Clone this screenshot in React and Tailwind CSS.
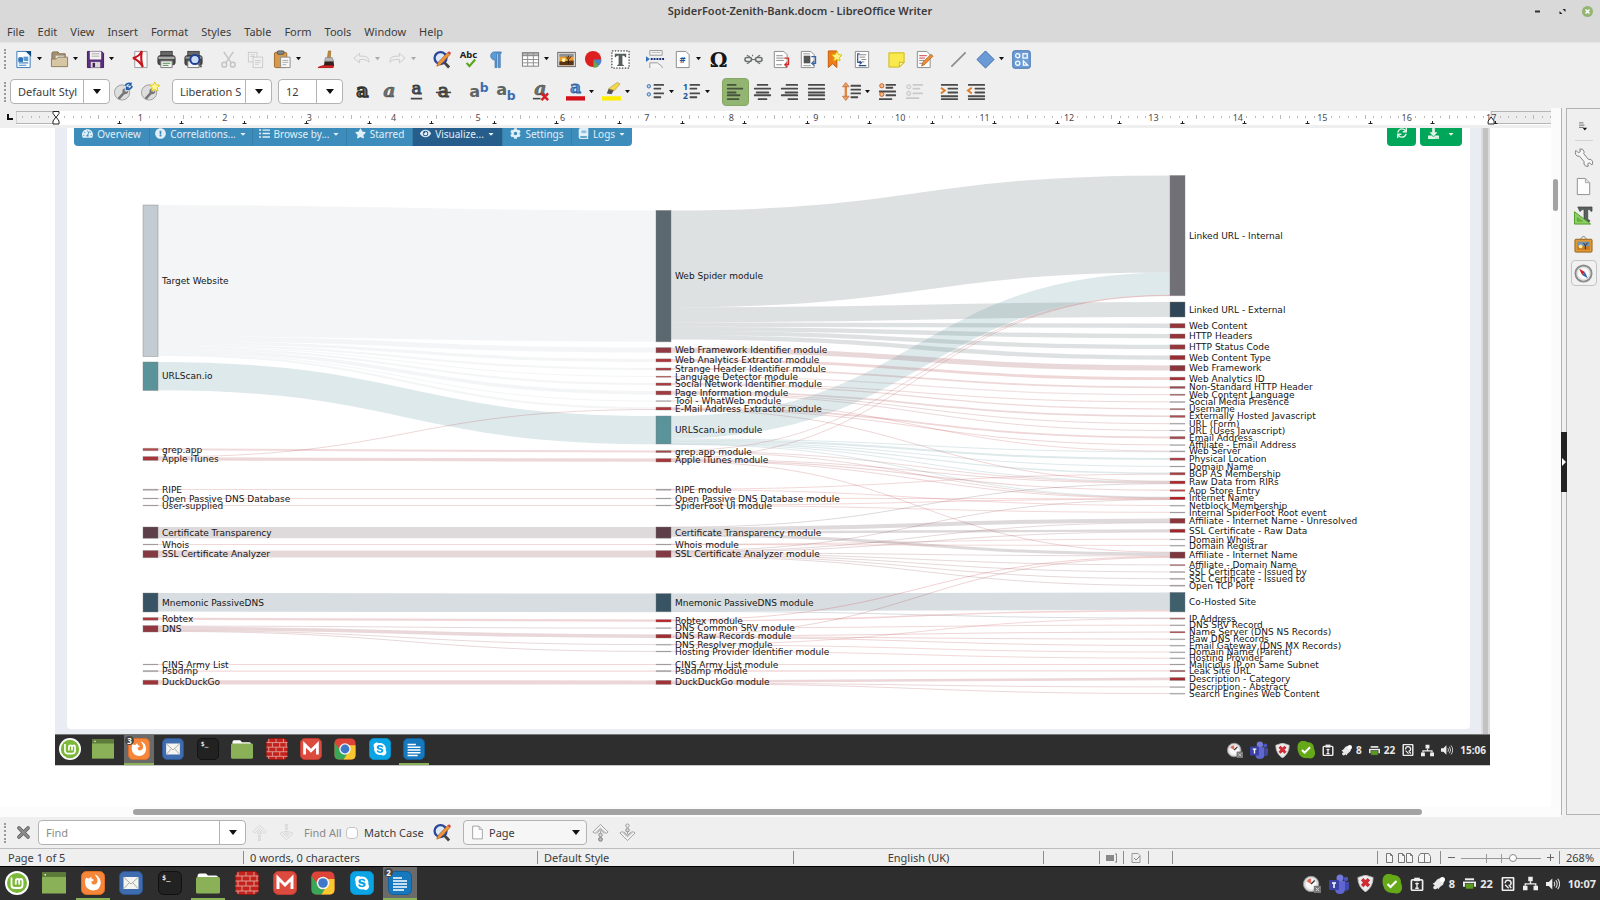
import React from "react";
import {
  FaTachometerAlt, FaExclamationCircle, FaListUl, FaStar, FaEye, FaCog, FaBook,
  FaSync, FaDownload, FaSkype, FaCaretDown,
} from "react-icons/fa";

/* ---------- Sankey data: [label, top, height, colour] ---------- */
const LEFT = [
  ["Target Website", 205, 151.5, "#c3cbd3"],
  ["URLScan.io", 362, 28.5, "#5b939a"],
  ["grep.app", 448.3, 2.4, "#b8474a"],
  ["Apple iTunes", 456.6, 3.8, "#a8353a"],
  ["RIPE", 489, 1.4, null],
  ["Open Passive DNS Database", 498, 1, null],
  ["User-supplied", 505, 1, null],
  ["Certificate Transparency", 527, 11.3, "#5c3f49"],
  ["Whois", 544, 1, null],
  ["SSL Certificate Analyzer", 550.5, 7.2, "#843a43"],
  ["Mnemonic PassiveDNS", 593, 19, "#385464"],
  ["Robtex", 617.6, 2.6, "#ad3439"],
  ["DNS", 625.6, 6.4, "#913740"],
  ["CINS Army List", 664, 1, null],
  ["Psbdmp", 670.4, 1.4, null],
  ["DuckDuckGo", 680.2, 4.4, "#a03338"],
];
const MID = [
  ["Web Spider module", 210.4, 131.4, "#5b6870"],
  ["Web Framework Identifier module", 347.6, 5.2, "#913a43"],
  ["Web Analytics Extractor module", 358.9, 3, "#ad3439"],
  ["Strange Header Identifier module", 368, 2.2, "#b03a3e"],
  ["Language Detector module", 376, 1.4, "#b5696d"],
  ["Social Network Identifier module", 383, 2.5, "#b03a3e"],
  ["Page Information module", 391, 3.8, "#a23a40"],
  ["Tool - WhatWeb module", 400.6, 1, null],
  ["E-Mail Address Extractor module", 407.2, 2.8, "#ad3439"],
  ["URLScan.io module", 416, 28, "#5b939a"],
  ["grep.app module", 450.6, 2, "#a8484c"],
  ["Apple iTunes module", 458.6, 3.4, "#a8353a"],
  ["RIPE module", 489, 1.4, null],
  ["Open Passive DNS Database module", 498, 1, null],
  ["SpiderFoot UI module", 505, 1, null],
  ["Certificate Transparency module", 527, 11.2, "#5c3f49"],
  ["Whois module", 544, 1, null],
  ["SSL Certificate Analyzer module", 550.6, 6.8, "#843a43"],
  ["Mnemonic PassiveDNS module", 593.6, 18.2, "#385464"],
  ["Robtex module", 619.6, 2.4, "#c41f24"],
  ["DNS Common SRV module", 627.6, 1, null],
  ["DNS Raw Records module", 634.4, 3.6, "#a32c33"],
  ["DNS Resolver module", 644.2, 1, null],
  ["Hosting Provider Identifier module", 651, 1, null],
  ["CINS Army List module", 664, 1, null],
  ["Psbdmp module", 670.4, 1.4, null],
  ["DuckDuckGo module", 680.4, 4, "#a03338"],
];
const RIGHT = [
  ["Linked URL - Internal", 175.5, 120.2, "#727077"],
  ["Linked URL - External", 302, 15, "#2f4656"],
  ["Web Content", 323.6, 4.4, "#96343a"],
  ["HTTP Headers", 334, 4.4, "#96343a"],
  ["HTTP Status Code", 344.8, 4.4, "#96343a"],
  ["Web Content Type", 355.4, 4.3, "#9c2b31"],
  ["Web Framework", 365.4, 5.5, "#8c343c"],
  ["Web Analytics ID", 377.2, 2.8, "#a62a30"],
  ["Non-Standard HTTP Header", 386.4, 2, "#a04b50"],
  ["Web Content Language", 394, 1.5, "#ab7276"],
  ["Social Media Presence", 401.4, 1.2, null],
  ["Username", 408.4, 1.5, "#ab7276"],
  ["Externally Hosted Javascript", 415.4, 2, "#b34b50"],
  ["URL (Form)", 423.2, 1, null],
  ["URL (Uses Javascript)", 430, 1, null],
  ["Email Address", 436.6, 2.3, "#a8474c"],
  ["Affiliate - Email Address", 444.6, 1, null],
  ["Web Server", 450.8, 1.2, null],
  ["Physical Location", 458, 2.2, "#ad3a3e"],
  ["Domain Name", 466, 1, null],
  ["BGP AS Membership", 472.6, 2.3, "#ad3a3e"],
  ["Raw Data from RIRs", 481, 2.8, "#b0262b"],
  ["App Store Entry", 489.6, 1.8, "#b8474a"],
  ["Internet Name", 497, 2.6, "#b8181d"],
  ["Netblock Membership", 505.2, 1, null],
  ["Internal SpiderFoot Root event", 512, 1, null],
  ["Affiliate - Internet Name - Unresolved", 518.4, 4.8, "#8f343b"],
  ["SSL Certificate - Raw Data", 529.2, 3.2, "#a32228"],
  ["Domain Whois", 539, 1, null],
  ["Domain Registrar", 545.2, 1, null],
  ["Affiliate - Internet Name", 552, 6.2, "#7f373f"],
  ["Affiliate - Domain Name", 564.4, 1.4, "#ab7276"],
  ["SSL Certificate - Issued by", 571.4, 1.2, null],
  ["SSL Certificate - Issued to", 578.2, 1.2, null],
  ["Open TCP Port", 585, 1.3, null],
  ["Co-Hosted Site", 592.4, 19.5, "#3d606c"],
  ["IP Address", 617.8, 1.5, "#b07276"],
  ["DNS SRV Record", 624.8, 1, null],
  ["Name Server (DNS NS Records)", 631.4, 1.6, "#b05a5e"],
  ["Raw DNS Records", 638.8, 1, null],
  ["Email Gateway (DNS MX Records)", 645.2, 1, null],
  ["Domain Name (Parent)", 651.8, 1, null],
  ["Hosting Provider", 657.8, 1, null],
  ["Malicious IP on Same Subnet", 664, 1, null],
  ["Leak Site URL", 670.2, 1.6, "#9c5a5f"],
  ["Description - Category", 677.6, 2.8, "#a32a30"],
  ["Description - Abstract", 686.6, 1, null],
  ["Search Engines Web Content", 693.2, 1, null],
];

/* [source index, target index, thickness] */
const LINKS_A = [
  [0, 0, 131.3], [0, 1, 5], [0, 2, 3], [0, 3, 2], [0, 4, 1], [0, 5, 2.2], [0, 6, 3.6], [0, 7, 1], [0, 8, 2],
  [1, 9, 28.3], [2, 10, 2], [3, 8, 0.6], [3, 11, 3.2], [4, 12, 1], [5, 13, 1], [6, 14, 1],
  [7, 15, 11.2], [8, 16, 1], [9, 17, 7], [10, 18, 18.6], [11, 19, 2.2],
  [12, 20, 1], [12, 21, 3.6], [12, 22, 0.8], [12, 23, 0.8], [13, 24, 1], [14, 25, 1.3], [15, 26, 4.2],
];
const LINKS_B = [
  [0, 0, 97], [0, 1, 15], [0, 2, 4.3], [0, 3, 4.3], [0, 4, 4.3], [0, 5, 4.3],
  [1, 6, 5.2], [2, 7, 2.8], [3, 8, 1.8], [4, 9, 1.2], [5, 10, 1], [5, 11, 1.2],
  [6, 12, 1.7], [6, 13, 1], [6, 14, 1], [7, 17, 0.6], [8, 15, 1.8], [8, 16, 0.6], [8, 21, 0.5],
  [9, 0, 22.6], [9, 17, 0.8], [9, 18, 2], [9, 19, 0.8], [9, 20, 1.4], [9, 21, 0.5], [9, 23, 0.5],
  [10, 0, 0.3], [10, 21, 0.8], [10, 23, 0.5], [11, 0, 0.3], [11, 21, 0.7], [11, 22, 1.2], [11, 23, 0.5],
  [11, 30, 0.5], [12, 20, 0.5], [12, 24, 0.6], [13, 23, 0.5], [14, 23, 0.3], [14, 25, 0.6],
  [15, 21, 0.4], [15, 26, 4], [15, 27, 2.4], [15, 30, 3],
  [16, 28, 0.4], [16, 29, 0.4], [17, 23, 0.5], [17, 26, 0.7], [17, 27, 0.7], [17, 30, 0.8],
  [17, 31, 1], [17, 32, 1], [17, 33, 1], [17, 34, 1],
  [18, 35, 17.6], [18, 36, 0.5], [19, 30, 0.6], [19, 35, 1.4], [20, 37, 0.7], [21, 30, 1], [21, 38, 1.2],
  [21, 39, 0.5], [21, 40, 0.5], [22, 36, 0.5], [22, 41, 0.5], [23, 42, 0.7], [24, 43, 1], [25, 44, 1.3],
  [26, 45, 2.6], [26, 46, 0.6], [26, 47, 0.6],
];

function bands(links, from, to, x0, x1) {
  const out = from.map((n) => n[1]);
  const into = to.map((n) => n[1]);
  const xm = (x0 + x1) / 2;
  return links.map(([s, t, w], i) => {
    const y0 = out[s] + w / 2;
    const y1 = into[t] + w / 2;
    out[s] += w;
    into[t] += w;
    return (
      <path
        key={i}
        d={`M${x0} ${y0}C${xm} ${y0} ${xm} ${y1} ${x1} ${y1}`}
        fill="none"
        stroke={from[s][3] || "#c43c3c"}
        strokeOpacity="0.2"
        strokeWidth={Math.max(w, 1)}
      />
    );
  });
}

function Nodes({ nodes, x }) {
  return nodes.map(([label, y, h, color]) => (
    <g key={label}>
      <rect x={x} y={y} width="15" height={h} fill={color || "#a9a3a4"} stroke="#808080" strokeOpacity={h < 2 ? 0.2 : 0.5} strokeWidth="0.8" />
      <text x={x + 19} y={y + h / 2 + 3} className="fill-[#161616]">{label}</text>
    </g>
  ));
}

function Sankey() {
  return (
    <svg viewBox="67 146 1403 583" preserveAspectRatio="xMidYMin meet" role="img" aria-label="Data flow from sources through modules to data types"
      className="block w-full font-['DejaVu_Sans',sans-serif] text-[9px]">
      {bands(LINKS_A, LEFT, MID, 158, 656)}
      {bands(LINKS_B, MID, RIGHT, 671, 1170)}
      <Nodes nodes={LEFT} x={143} />
      <Nodes nodes={MID} x={656} />
      <Nodes nodes={RIGHT} x={1170} />
    </svg>
  );
}

/* ---------- Toolbar icons, 20 x 20 ---------- */
const doc = (fill = "#fdfdfd", stroke = "#8a8a8a") => <path d="M3.5 1.500h10l3.500 3.500v13.500h-13.500z" fill={fill} stroke={stroke} />;
const bars = (rows, color = "#4a4a4a") => rows.map(([x, y, w], i) => <rect key={i} x={x} y={y} width={w} height="2" rx="0.6" fill={color} />);
const glyph = (ch, extra, y = 16) => (
  <text x="10" y={y} textAnchor="middle" fontFamily="DejaVu Serif, serif" fontWeight="700" fontSize="20" fill="#6a716f" stroke="#3b3f3e" strokeWidth="0.8" {...extra}>{ch}</text>
);

const ICONS = {
  new: <><path d="M3 1.500h10l4 4v13h-14z" fill="#fbfdff" stroke="#3a78b5" /><path d="M12 1h6v6z" fill="#12507f" /><path d="M5 8h4M5 13.500h10M5 16h8M11 11h4" stroke="#4b8ac6" strokeWidth="1.200" /><rect x="4.500" y="8.500" width="5" height="4" fill="#2d72b8" /><rect x="10" y="7" width="5" height="4" fill="#5c9bd6" /></>,
  open: <><path d="M2 3.500q0-1.500 1.500-1.500h5l1.500 2h6v11h-14z" fill="#a3906f" stroke="#80704f" /><path d="M6 6h9v8h-9z" fill="#f3f3f3" stroke="#aaa" strokeWidth="0.600" /><path d="M1.500 9.500h5l2-2h10v10h-17z" fill="#d6c6a4" stroke="#8f7d5b" /></>,
  save: <><path d="M1.500 1.500h15l2 2v15h-17z" fill="#5b2d7d" stroke="#401b5c" /><rect x="4" y="1.500" width="12" height="8.500" fill="#f2f2f2" /><path d="M6 4h8M6 6.500h8" stroke="#aaa" /><rect x="5" y="12.500" width="10" height="6" fill="#d8d8d8" /><rect x="7" y="13.500" width="2.500" height="4.500" fill="#402050" /></>,
  pdf: <><path d="M5 1.500h13v17h-13z" fill="#fafafa" stroke="#9a9a9a" /><path d="M3 8.500c6-1 8-4 9.500-7.500M12.500 1c-1.500 7-1 11 1 17M3 8.500c4 1.500 8 5 10.500 9.500" fill="none" stroke="#c8141b" strokeWidth="2.200" /></>,
  print: <><rect x="4" y="1.500" width="12" height="6" fill="#666" stroke="#444" /><rect x="1" y="6" width="18" height="9.500" rx="2" fill="#4c4c4c" stroke="#333" /><rect x="1.500" y="7" width="17" height="2.500" fill="#a9a9a9" /><path d="M4 11.500h12v7h-12z" fill="#f4f4f4" stroke="#777" /><path d="M6 14h8M6 16.200h6" stroke="#4d8a46" /></>,
  preview: <><rect x="4" y="1.500" width="12" height="6" fill="#666" stroke="#444" /><rect x="1" y="6" width="18" height="10" rx="2" fill="#4c4c4c" stroke="#333" /><rect x="1.500" y="7" width="17" height="2" fill="#9b9b9b" /><path d="M4 11.500h12v7h-12z" fill="#f4f4f4" stroke="#777" /><circle cx="11.500" cy="10" r="4.800" fill="#c9dcf3" stroke="#1e3f93" strokeWidth="2" /><path d="M15 14l3.500 4" stroke="#666" strokeWidth="2" /></>,
  cut: <g fill="none" stroke="#c4c4c4" strokeWidth="1.600"><path d="M5 2l7.500 11M15 2l-7.500 11" /><circle cx="5.500" cy="15.500" r="2.500" /><circle cx="14.500" cy="15.500" r="2.500" /></g>,
  copy: <g fill="#f1f1f1" stroke="#cbcbcb"><rect x="2.500" y="2.500" width="9" height="10" /><path d="M4.500 5h5M4.500 7h5" /><rect x="7.500" y="7.500" width="10" height="11" /><path d="M9.500 11h6M9.500 13h6M9.500 15h4" /></g>,
  paste: <><rect x="1.500" y="2.500" width="13" height="16" rx="1.500" fill="#d79a4a" stroke="#9c6a26" /><rect x="4.500" y="1" width="7" height="3.500" rx="1" fill="#888" stroke="#555" /><path d="M8 7.500h10v11h-10z" fill="#f8f8f8" stroke="#8a8a8a" /><path d="M10 11h6M10 13h6M10 15.500h4" stroke="#aaa" /></>,
  brush: <><path d="M12 1h2.500l-.500 7h-3z" fill="#c98a3a" stroke="#8a5a1c" strokeWidth="0.600" /><path d="M9 8h7l1.500 4h-9.500z" fill="#b9b9b9" stroke="#777" strokeWidth="0.600" /><path d="M8 12h9.500l.500 5h-11z" fill="#2e2522" /><path d="M1 18.500q4-2 6-2h10v2z" fill="#d42a2a" stroke="#b51717" /></>,
  undo: <path d="M2 8.500l6-5v3h4q6 0 6 6.500q-2-3-6-3h-4v3.500z" fill="#efefef" stroke="#cacaca" />,
  redo: <path d="M18 8.500l-6-5v3h-4q-6 0-6 6.500q2-3 6-3h4v3.500z" fill="#efefef" stroke="#cacaca" />,
  find: <><circle cx="9" cy="8.500" r="6.300" fill="#dbe8f7" stroke="#28459b" strokeWidth="2.400" /><path d="M13 13l5 5.500" stroke="#444" strokeWidth="3" /><path d="M5 17l1.500-4L16.500 2.500l2.500 2.200L8.800 15.500z" fill="#f0963a" stroke="#a1551a" strokeWidth="0.700" /><path d="M16.500 2.500l2.500 2.200 1-1.500-2-2z" fill="#d83a3a" /></>,
  spell: <><text x="10" y="8" textAnchor="middle" fontFamily="Noto Sans, sans-serif" fontWeight="700" fontSize="10" fill="#222">Abc</text><path d="M8 13.500l3 3.500 6-7" fill="none" stroke="#57a51c" strokeWidth="2.200" /></>,
  pilcrow: <path d="M9 2h7v1.500h-1v15h-2v-15h-1.500v15h-2v-8c-6 0-6-8.500-.500-8.500z" fill="#5d9bd5" stroke="#2f6aa8" strokeWidth="0.700" />,
  table: <><rect x="1.500" y="3" width="17" height="14" fill="#fff" stroke="#7d7d7d" /><rect x="1.500" y="3" width="17" height="3" fill="#b8b8b8" stroke="#7d7d7d" /><path d="M1.500 10h17M1.500 13.500h17M7 3v14M13 3v14" stroke="#8d8d8d" /></>,
  image: <><rect x="0.800" y="2.500" width="18.500" height="15" fill="#e9e9e9" stroke="#666" /><rect x="2.500" y="4" width="15" height="12" fill="#e99a2e" /><path d="M2.500 12l15-1v5h-15z" fill="#5b3413" /><path d="M2.500 4h15v3h-15z" fill="#8b9299" /><circle cx="7" cy="10.500" r="2" fill="#fff2a0" /><path d="M12 15v-5l-2-3M12 10l3-3.500M12 8v-2" stroke="#33200d" fill="none" /></>,
  chart: <><circle cx="9.500" cy="9.500" r="8.500" fill="#dd1f1f" /><path d="M10 10h8.500a8.500 8.500 0 0 1-3.500 6.800z" fill="#4a86c8" /><path d="M10 10l5.500 7a8.500 8.500 0 0 1-5.500 1.700z" fill="#6aa84f" /></>,
  textbox: <><rect x="1" y="1" width="18" height="18" fill="#fff" stroke="#111" strokeDasharray="1.500 1.500" /><path d="M4 4h12v3.500h-1q-.500-1.700-3-1.700v9q0 1 1.500 1v1h-7v-1q1.500 0 1.500-1v-9q-2.500 0-3 1.700h-1z" fill="#555e5c" /></>,
  pagebreak: <><path d="M4 0.500h13v5h-13z" fill="#f4f4f4" stroke="#9a9a9a" /><path d="M6 2.500h9" stroke="#bbb" /><path d="M4 19v-5.500h8l5 4v1.500" fill="#f4f4f4" stroke="#9a9a9a" /><path d="M0 6.500v6l4-3z" fill="#2d72b8" /><path d="M5 9.500h15" stroke="#15327a" strokeWidth="2" strokeDasharray="2 1" /></>,
  field: <>{doc()}<text x="10" y="14" textAnchor="middle" fontFamily="Noto Sans, sans-serif" fontWeight="600" fontSize="10" fill="#1d4f91">#</text></>,
  omega: <text x="10" y="17.500" textAnchor="middle" fontFamily="DejaVu Serif, serif" fontWeight="700" fontSize="21" fill="#161616">Ω</text>,
  link: <g fill="none" stroke="#6b706e" strokeWidth="1.600"><rect x="1" y="8" width="7" height="4" rx="2" /><rect x="12" y="8" width="7" height="4" rx="2" /><path d="M7 10h6M3 5.500l3 1.500M9 5v1.500M17 5.500l-3 1.500M3 14.500l3-1.500M17 14.500l-3-1.500" strokeWidth="1.200" /></g>,
  footnote: <>{doc()}<path d="M5.500 6h7M5.500 8.500h8M5.500 11h8M5.500 15.500h6" stroke="#8b8b8b" /><path d="M14 8.500h4.500v7h-3M17 13l-2.500 2.500 2.500 2.500" fill="none" stroke="#cc2b2b" strokeWidth="1.300" /></>,
  endnote: <>{doc()}<rect x="6" y="6" width="7" height="8" fill="#555" /><path d="M5.500 4h7M5.500 16.500h8" stroke="#999" /><path d="M14 7h4.500v7h-3M17 11.500l-2.500 2.500 2.500 2.500" fill="none" stroke="#3566ad" strokeWidth="1.300" /></>,
  bookmark: <><path d="M3.500 1h9v17.500l-4.500-4-4.500 4z" fill="#f07c17" stroke="#c45a08" /><path d="M12.500 1.500l1.700 3.200 3.600.600-2.500 2.600.500 3.600-3.300-1.600-3.200 1.600.500-3.600-2.600-2.600 3.700-.600z" fill="#fff08a" stroke="#dcc000" /></>,
  crossref: <><path d="M3.500 1.500h14v17h-14z" fill="#fdfdfd" stroke="#8a8a8a" /><path d="M7 5h8M8 7.500h6M10 10h5M10 12.500h3" stroke="#888" /><path d="M8 4h-2v9h3M8 11.500l2 1.800-2 1.800M7 16.500h8" fill="none" stroke="#2c4d8f" strokeWidth="1.200" /></>,
  comment: <><path d="M2 3h16v10l-5 5h-11z" fill="#f9e94e" stroke="#cdb614" /><path d="M18 13h-5v5z" fill="#fff8b5" stroke="#cdb614" /></>,
  track: <>{doc()}<path d="M5.500 6h8M5.500 8.500h6" stroke="#cc3b3b" /><path d="M5.500 11h5M5.500 14h4" stroke="#888" /><path d="M8 17l1.500-4.500 8.500-8 2 2-8.500 8.500z" fill="#ef8d34" stroke="#a1551a" strokeWidth="0.700" /></>,
  line: <path d="M2.500 17.500l15-15" stroke="#8a8a8a" strokeWidth="1.600" />,
  shapes: <path d="M10 1l9 9-9 9-9-9z" fill="#6b9bd6" stroke="#3a6aa8" />,
  draw: <><rect x="0.800" y="0.800" width="18.400" height="18.400" rx="2" fill="#6d9ed8" stroke="#3e6ea9" /><g fill="none" stroke="#fff" strokeWidth="1.300"><circle cx="6" cy="6" r="2.200" /><rect x="11.500" y="4" width="4.500" height="4.500" /><circle cx="6" cy="14" r="2.200" /><path d="M12 11.500v4.500h4.500z" /></g></>,
  bold: glyph("a", { stroke: "#2d302f", strokeWidth: 1.4 }),
  italic: glyph("a", { fontStyle: "italic", strokeWidth: 0.5 }),
  underline: <>{glyph("a", { fontWeight: 400, strokeWidth: 1.1, fontSize: 18 }, 13)}<path d="M4 17.500h12" stroke="#444" strokeWidth="1.800" /></>,
  strike: <>{glyph("a", { fontWeight: 400, strokeWidth: 1.1 })}<path d="M2 11h16" stroke="#444" strokeWidth="1.600" /></>,
  sup: <><text x="6" y="16" textAnchor="middle" fontFamily="DejaVu Sans, sans-serif" fontWeight="700" fontSize="17" fill="#5d6462">a</text><text x="16" y="11" textAnchor="middle" fontFamily="DejaVu Sans, sans-serif" fontWeight="700" fontSize="13" fill="#3c6cb0">b</text></>,
  sub: <><text x="6" y="14" textAnchor="middle" fontFamily="DejaVu Sans, sans-serif" fontWeight="700" fontSize="17" fill="#5d6462">a</text><text x="16" y="19" textAnchor="middle" fontFamily="DejaVu Sans, sans-serif" fontWeight="700" fontSize="13" fill="#3c6cb0">b</text></>,
  clear: <>{glyph("a", { fontStyle: "italic", strokeWidth: 0.5 }, 14)}<path d="M2 17.500h8" stroke="#444" strokeWidth="1.600" /><path d="M11 12l7 7M18 12l-7 7" stroke="#d81e1e" strokeWidth="2.600" /></>,
  color: <>{glyph("a", { fill: "#5b90cf", stroke: "#2b5c9c", fontSize: 18 }, 12)}<rect x="0" y="15" width="20" height="4.500" fill="#d40f17" /></>,
  highlight: <><path d="M5 12l2-5 6 1-3 5z" fill="#555" /><path d="M7 7L16 .500l3 1.500-6 7z" fill="#f3d84a" stroke="#a8902a" strokeWidth="0.600" /><rect x="0" y="15" width="20" height="4.500" fill="#ffee00" /></>,
  bullets: <>{bars([[8, 2, 11], [8, 6, 8], [8, 11, 11], [8, 15, 8]])}<circle cx="3" cy="4.500" r="1.800" fill="#bcd4ee" stroke="#3a72b4" /><circle cx="3" cy="13" r="1.800" fill="#bcd4ee" stroke="#3a72b4" /></>,
  numbers: <>{bars([[8, 2, 11], [8, 6, 8], [8, 11, 11], [8, 15, 8]])}<text x="1" y="8" fontFamily="Noto Sans, sans-serif" fontWeight="700" fontSize="9" fill="#1d5494">1</text><text x="1" y="18" fontFamily="Noto Sans, sans-serif" fontWeight="700" fontSize="9" fill="#1d5494">2</text></>,
  left: bars([[1, 2, 10], [1, 6, 17], [1, 10, 10], [1, 13, 14], [1, 17, 13]], "#47523f"),
  center: bars([[4, 2, 12], [1, 6, 18], [3, 10, 14], [1, 13, 18], [5, 17, 10]]),
  right: bars([[6, 2, 13], [1, 6, 18], [5, 10, 14], [1, 13, 18], [8, 17, 11]]),
  justify: bars([[1, 2, 18], [1, 6, 18], [1, 10, 18], [1, 13, 18], [1, 17, 18]]),
  spacing: <>{bars([[9, 3, 11], [9, 7, 11], [9, 11, 11], [9, 15, 8]])}<path d="M4 3v14" stroke="#e2843a" strokeWidth="2.400" /><path d="M0.500 5L4 .500 7.500 5zM0.500 15l3.500 4.500L7.500 15z" fill="#e9a063" stroke="#b9642a" strokeWidth="0.700" /></>,
  incpara: <>{bars([[8, 2, 11], [8, 5, 8], [1, 9, 18], [8, 13, 11], [1, 17, 14]])}<circle cx="4" cy="4" r="2.200" fill="#f3b98c" stroke="#c75f1f" /><circle cx="4" cy="13" r="2.200" fill="#f3b98c" stroke="#c75f1f" /></>,
  decpara: <>{bars([[8, 2, 11], [8, 6, 8], [8, 11, 11], [1, 16, 14]], "#c9c9c9")}<circle cx="4" cy="5" r="2.200" fill="#e5e5e5" stroke="#c6c6c6" /><circle cx="4" cy="12" r="2.200" fill="#e5e5e5" stroke="#c6c6c6" /></>,
  indent: <>{bars([[1, 2, 18], [8, 6, 11], [8, 10, 11], [1, 14, 18], [1, 17, 18]])}<path d="M1 6l4 3-4 3" fill="none" stroke="#e07b24" strokeWidth="2" /></>,
  outdent: <>{bars([[1, 2, 18], [8, 6, 11], [8, 10, 11], [1, 14, 18], [1, 17, 18]])}<path d="M5 6l-4 3 4 3" fill="none" stroke="#e07b24" strokeWidth="2" /></>,
  styleUpdate: <><circle cx="8.500" cy="11" r="8" fill="#dedede" stroke="#9c9c9c" /><path d="M4 16.500l5-5.500q-1-4 3-4.500l-1 2.500 2 1.500 2-1.500q.500 4-4 4l-4.500 5q-2 .500-2.500-1.500" fill="#777" /><path d="M12 4a4 4 0 0 1 6-2M19 4a4 4 0 0 1-6 3" fill="none" stroke="#1c5fae" strokeWidth="1.800" /><path d="M18.500 0v4h-4zM12.500 9v-4h4z" fill="#1c5fae" /></>,
  styleNew: <><circle cx="8.500" cy="11" r="8" fill="#dedede" stroke="#9c9c9c" /><path d="M4 16.500l5-5.500q-1-4 3-4.500l-1 2.500 2 1.500 2-1.500q.500 4-4 4l-4.500 5q-2 .500-2.500-1.500" fill="#777" /><path d="M14.500 0l1.600 3 3.600.500-2.500 2.500.500 3.500-3.200-1.500-3.200 1.500.500-3.500-2.400-2.500 3.600-.500z" fill="#fff7a0" stroke="#e3c800" /></>,
  close: <><path d="M4 4l12 12M16 4l-12 12" stroke="#5e5e5e" strokeWidth="5" strokeLinecap="round" /><path d="M4 4l12 12M16 4l-12 12" stroke="#8c8c8c" strokeWidth="3" strokeLinecap="round" /></>,
  upOff: <path d="M3 9l7-6.500 7 6.500-2 1.500-5-4.500-5 4.500zM10 8l2.500 3h-5zM9 13h2v2h-2zM9 16.500h2v2h-2z" fill="none" stroke="#d5d5d5" />,
  downOff: <path d="M3 11l7 6.500 7-6.500-2-1.500-5 4.500-5-4.500zM10 12l2.500-3h-5zM9 5h2v2h-2zM9 1.500h2v2h-2z" fill="none" stroke="#d5d5d5" />,
  up: <><path d="M2 9.500l8-8 8 8-2.200 1.500-5.800-5.500-5.800 5.500z" fill="#f4f4f4" stroke="#9e9e9e" /><path d="M6 11l4-4 4 4M10 8v3" fill="none" stroke="#9e9e9e" /><circle cx="10" cy="12.500" r="1.800" fill="#ddd" stroke="#888" /><circle cx="10" cy="17.200" r="2" fill="#bbb" stroke="#777" /></>,
  down: <><path d="M2 10.500l8 8 8-8-2.200-1.500-5.800 5.500-5.800-5.500z" fill="#f4f4f4" stroke="#9e9e9e" /><path d="M6 9l4 4 4-4M10 12v-3" fill="none" stroke="#9e9e9e" /><circle cx="10" cy="7.500" r="1.800" fill="#ddd" stroke="#888" /><circle cx="10" cy="2.800" r="1.800" fill="#eee" stroke="#999" /></>,
  page: <><path d="M3.500 1.500h8.500l4.500 4.500v12.500h-13z" fill="#fdfdfd" stroke="#8d8d8d" /><path d="M12 1.500v4.500h4.500" fill="#e2e2e2" stroke="#aaa" /></>,
  wrench: <path d="M2 2.500l2.500 2.500 2-1-.300-3q3.500-.500 4.300 2.500.300 1.300-.300 2.500l5 6q3-1 4.300 2 .600 2-.700 4l-2.300-2.500-2 1 .500 2.800q-3.500.700-4.500-2.500-.200-1.200.300-2.200l-5-6q-2.800 1-4.100-2-.600-2 .300-4.100z" fill="#f6f6f6" stroke="#7c7c7c" />,
  type: <><path d="M4 1h15v4.500h-1.200q-.500-2-3.300-2v10q0 1.500 2 1.500v1.500h-8v-1.500q2 0 2-1.500v-10q-3 0-3.500 2h-1z" fill="#5a6260" stroke="#2e3231" strokeWidth="0.600" /><path d="M0.500 6v13h17z" fill="#8fcf68" stroke="#4c9a26" /><path d="M3.500 12v4h5.500z" fill="#6fb545" stroke="#4c9a26" strokeWidth="0.600" /></>,
  gallery: <><path d="M6 5l4-4 4 4" fill="none" stroke="#777" /><rect x="1" y="4.500" width="18" height="13.500" rx="1" fill="#e0982f" stroke="#96601a" /><rect x="3.500" y="7" width="13" height="8.500" fill="#6f93b5" /><path d="M3.500 12h13v3.500h-13z" fill="#d07a1c" /><circle cx="7" cy="12" r="2" fill="#ffe98a" /><path d="M12 15v-4l-2-2.500M12 11l2.500-3" stroke="#3a2410" fill="none" /></>,
  compass: <><circle cx="10" cy="10" r="8.500" fill="#e9eef2" stroke="#8b8b8b" strokeWidth="2" /><circle cx="10" cy="10" r="6.300" fill="#fdfdfd" stroke="#c4c4c4" strokeWidth="0.600" /><path d="M5.500 5l6 3.500-3 3z" fill="#d11f1f" /><path d="M14.500 15l-6-3.500 3-3z" fill="#3466ad" /></>,
};

function Icon({ name, className = "size-[19px]" }) {
  return <svg viewBox="0 0 20 20" aria-hidden="true" className={className + " shrink-0 overflow-visible"}>{ICONS[name]}</svg>;
}

const Caret = ({ className = "w-[5px]" }) => (
  <svg viewBox="0 0 8 5" aria-hidden="true" className={className}><path d="M0 0h8l-4 5z" fill="currentColor" /></svg>
);

function Tool({ name, label, drop, active, off }) {
  return (
    <div className="flex shrink-0 items-center">
      <button aria-label={label} className={"flex h-7 w-[27px] items-center justify-center " + (active ? "rounded-sm border border-[#86a666] bg-[#93b572]" : "")}>
        <Icon name={name} />
      </button>
      {drop && (
        <button aria-label={label + " options"} className={"flex h-7 w-[9px] items-center justify-start " + (off ? "text-[#aaa]" : "text-[#111]")}>
          <Caret />
        </button>
      )}
    </div>
  );
}

const Grip = () => <div className="mr-[4px] h-5 w-0 shrink-0 border-l-2 border-dotted border-[#999]" />;

const FILE_TOOLS = [
  [["new", "New", 1], ["open", "Open", 1], ["save", "Save", 1]],
  [["pdf", "Export as PDF"], ["print", "Print"], ["preview", "Print preview"]],
  [["cut", "Cut"], ["copy", "Copy"], ["paste", "Paste", 1]],
  [["brush", "Clone formatting"]],
  [["undo", "Undo", 1, 0, 1], ["redo", "Redo", 1, 0, 1]],
  [["find", "Find and replace"], ["spell", "Spelling"], ["pilcrow", "Formatting marks"]],
  [["table", "Insert table", 1], ["image", "Insert image"], ["chart", "Insert chart"], ["textbox", "Insert text box"]],
  [["pagebreak", "Insert page break"], ["field", "Insert field", 1], ["omega", "Special character"]],
  [["link", "Insert hyperlink"], ["footnote", "Insert footnote"], ["endnote", "Insert endnote"], ["bookmark", "Insert bookmark"], ["crossref", "Cross-reference"]],
  [["comment", "Insert comment"], ["track", "Track changes"]],
  [["line", "Insert line"], ["shapes", "Basic shapes", 1], ["draw", "Draw functions"]],
];
const FORMAT_TOOLS = [
  [["bold", "Bold"], ["italic", "Italic"], ["underline", "Underline"], ["strike", "Strikethrough"]],
  [["sup", "Superscript"], ["sub", "Subscript"]],
  [["clear", "Clear formatting"]],
  [["color", "Font colour", 1], ["highlight", "Highlighting", 1]],
  [["bullets", "Bullets", 1], ["numbers", "Numbering", 1]],
  [["left", "Align left", 0, 1], ["center", "Centre"], ["right", "Align right"], ["justify", "Justify"]],
  [["spacing", "Line spacing", 1], ["incpara", "Increase paragraph spacing"], ["decpara", "Decrease paragraph spacing"]],
  [["indent", "Increase indent"], ["outdent", "Decrease indent"]],
];

const ToolGroups = ({ groups }) => groups.map((g, i) => (
  <div key={i} className="flex">
    {g.map(([name, label, drop, active, off]) => <Tool key={name} name={name} label={label} drop={!!drop} active={!!active} off={!!off} />)}
  </div>
));

function Combo({ label, value, placeholder, className }) {
  return (
    <div className={"flex h-[25px] shrink-0 rounded-sm border border-[#b3b3b3] bg-white " + className}>
      <input aria-label={label} defaultValue={value} placeholder={placeholder} className="min-w-0 flex-1 pl-[7px] outline-none placeholder:text-[#8a8a8a]" />
      <button aria-label={label + " list"} className="flex w-[26px] shrink-0 items-center justify-center border-l border-[#b3b3b3] text-[#111]"><Caret className="w-2" /></button>
    </div>
  );
}

/* ---------- Ruler ---------- */
function Ruler() {
  const unit = 84.42;
  const zero = 40;
  const end = zero + unit * 17;
  const ticks = [];
  for (let i = -4; i <= 178; i++) {
    const x = Math.round(zero + (i * unit) / 10) + 0.5;
    if (i % 10 === 0) continue;
    const half = Math.abs(i) % 5 === 0;
    ticks.push(<path key={i} d={`M${x} ${half ? 4 : 5}v${half ? 4 : 2}`} stroke="#b9b9b9" />);
  }
  return (
    <div className="flex h-[20px] shrink-0 bg-[#efefef]">
      <svg aria-hidden="true" className="h-[17px] w-4"><path d="M8 6v5h5" fill="none" stroke="#111" strokeWidth="2" /></svg>
      <svg aria-hidden="true" className="mt-[3px] h-[14px] flex-1 bg-white text-[9px]">
        <rect x="0" y="0.500" width={zero} height="12" fill="#efefef" stroke="#b5b5b5" />
        <rect x={end} y="0.500" width="400" height="12" fill="#ededed" stroke="#b5b5b5" />
        {ticks}
        {Array.from({ length: 17 }, (_, i) => (
          <text key={i} x={zero + unit * (i + 1)} y="10" textAnchor="middle" fill="#4a4a52">{i + 1}</text>
        ))}
        {Array.from({ length: 23 }, (_, i) => Math.round(zero + 62.55 * (i + 1)) + 0.5).map((x) => (
          <path key={x} d={`M${x} 10v3M${x - 2} 12.500h4`} stroke="#222" fill="none" />
        ))}
        <path d={`M${zero - 3} 0.500h6v2l-3 4-3-4zM${zero - 3} 13v-3l3-4 3 4v3z`} fill="#fff" stroke="#222" />
        <path d={`M${end - 3} 13v-3l3-4 3 4v3z`} fill="#fff" stroke="#222" />
      </svg>
    </div>
  );
}

/* ---------- Task bars ---------- */
const tile = (fill, child, edge) => <><rect x="0.500" y="0.500" width="23" height="23" rx="5" fill={fill} stroke={edge || "none"} />{child}</>;
const brick = "M3 1v4M11 1v4M19 1v4M7 5v5M15 5v5M22 5v5M3 10v5M11 10v5M19 10v5M7 15v5M15 15v5M3 20v3M11 20v3M19 20v3M0.500 5h23M0.500 10h23M0.500 15h23M0.500 20h23";
const APPS = {
  Menu: <><circle cx="12" cy="12" r="12" fill="#fff" /><circle cx="12" cy="12" r="10" fill="#7db83b" /><path d="M6.500 6.500v7.500q0 3 3 3h5q3 0 3-3v-4q0-2-1.600-2t-1.700 2v3.500M14.200 13.500v-3.500q0-2-1.700-2t-1.700 2v3.500" fill="none" stroke="#fff" strokeWidth="1.800" /></>,
  Desktop: <><rect x="0" y="1.500" width="24" height="21" fill="#8bb158" /><rect x="0" y="1.500" width="24" height="4.500" fill="#5d7c39" /><rect x="2.500" y="3" width="1.500" height="1.500" fill="#e8f0dc" /></>,
  Firefox: tile("#f6863a", <><path d="M5 6.500q1 1 3 1 1-1.500 2.500-1.500-.5 1 .5 2l2 .8q-.5 1.500-2.500 1.700-.5 2.500 2 3 3 .2 4-2.500 .8-3-1.500-5.500-1-1.200-1-2 5.500 2 5.800 8.500-.8 7.500-7.800 7.500-7.500-.5-8-8 .1-3 1-5z" fill="#fff" /></>, "#e06f24"),
  Mail: tile("#3f6cae", <><rect x="4.500" y="6" width="15" height="12" fill="#f4f4f0" /><path d="M5 6.500l7 6.500 7-6.500M5 17.500l5-5.500M19 17.500l-5-5.500" fill="none" stroke="#a9a9a3" /></>, "#2e5490"),
  Terminal: tile("#222", <text x="4" y="9" fontFamily="DejaVu Sans Mono, monospace" fontWeight="700" fontSize="7" fill="#eee">$_</text>, "#111"),
  Files: <><path d="M1.500 5q0-2.500 2-2.500h6.500l2 2h8q2 0 2 2v3h-20.500z" fill="#fff" /><rect x="0" y="6" width="24" height="16.500" rx="1.500" fill="#8bb158" /></>,
  Firewall: tile("#c4221c", <path d={brick} stroke="#e0a9a0" strokeWidth="0.900" />, "#8f1814"),
  Gmail: tile("#dd4b3f", <path d="M5 18v-11l7 7 7-7v11" fill="none" stroke="#fff" strokeWidth="3" />, "#c23b30"),
  Chrome: tile("#dd4337", <><path d="M0.500 5v13.500q0 5 5 5h6l4-9-9-1.500z" fill="#3aa757" /><path d="M23.500 8v10.500q0 5-5 5h-8l5-8-1-7.500z" fill="#fbc72e" /><circle cx="12" cy="12" r="6.300" fill="#f5f5f5" /><circle cx="12" cy="12" r="4.800" fill="#3f78c9" /></>),
  Skype: tile("#0ba5e6", <FaSkype x="4" y="4" size={16} color="#fff" />, "#0a8fca"),
  Writer: tile("#1878bd", <path d="M5 7h9M5 10h14M5 13h14M5 16h14M5 19h11" stroke="#fff" strokeWidth="1.600" />, "#0f5f9c"),
};

const TRAY = {
  perf: <><circle cx="9" cy="10" r="8.500" fill="#dcdcdc" stroke="#999" /><circle cx="9" cy="10" r="6" fill="#f7f7f7" /><path d="M9 10V4a6 6 0 0 0-5 3z" fill="#e06a5a" /><path d="M9 10l4-4" stroke="#333" strokeWidth="1.500" /><rect x="12" y="12" width="8" height="8" fill="#777" /><path d="M14 14l4 4M18 14l-4 4" stroke="#ddd" /></>,
  teams: <><circle cx="11" cy="4" r="3.500" fill="#7379d8" /><circle cx="17" cy="5" r="2.200" fill="#4e55bb" /><path d="M6 7h10v8q0 5-5 5t-5-5z" fill="#5f66cf" /><path d="M16 8h4v6q0 3-4 3z" fill="#4249ac" /><rect x="0" y="6" width="10" height="10" rx="1" fill="#3b42a6" /><path d="M3 9h4M5 9v5" stroke="#fff" strokeWidth="1.500" /></>,
  shield: <><path d="M10 0l9 3q0 11-9 17q-9-6-9-17z" fill="#ececec" stroke="#b5b5b5" /><path d="M6 5l8 8M14 5l-8 8" stroke="#cf2b35" strokeWidth="4" /></>,
  skype: <><path d="M5 0q4-.500 6 1 8 0 8 8 1.500 3 1 6-2 6-8 4-9 1-11-8-2-9 4-11z" fill="#65a919" /><path d="M5.500 10l3 3 6-6" fill="none" stroke="#fff" strokeWidth="2.200" /></>,
  clip: <><rect x="2" y="4" width="16" height="15" rx="1.500" fill="none" stroke="#eee" strokeWidth="2.400" /><path d="M6 1h8v5h-8z" fill="#eee" /><path d="M10 8v9M7.500 9.500h5M7.500 16h5" stroke="#eee" strokeWidth="2" /></>,
  bell: <><path d="M1 10q3-1 5-4 3-5 8-4l4 4q1 5-4 8-3 2-4 5z" fill="#e8e8e8" /><circle cx="5" cy="16" r="3" fill="#e8e8e8" /><circle cx="16" cy="4" r="4" fill="#fff" /></>,
  printer: <><rect x="3" y="2" width="14" height="3" fill="#eee" /><path d="M0 7h20v8h-20z" fill="#eee" /><rect x="3.500" y="10" width="13" height="8.500" fill="#5a9b1f" stroke="#2e2e2e" /></>,
  disk: <><rect x="2" y="1" width="16" height="18" rx="1" fill="none" stroke="#eee" strokeWidth="2.400" /><path d="M6 9q0-4.500 4-4.500t4.500 4q0 3-2.500 3.500l2.500 4" fill="none" stroke="#eee" strokeWidth="2.200" /><path d="M6 11l5 5" stroke="#eee" strokeWidth="2" /></>,
  net: <><path d="M7 1h6v6h-6zM0 13h6v6h-6zM14 13h6v6h-6z" fill="#eee" /><path d="M10 7v4M3 13v-2.500h14v2.500" fill="none" stroke="#eee" strokeWidth="1.800" /></>,
  volume: <><path d="M0 7h4l5-5v16l-5-5h-4z" fill="#eee" /><path d="M11.500 7q2 3 0 6M14 4.500q4 5.500 0 11M16.800 2.500q5.500 7.500 0 15" fill="none" stroke="#ddd" strokeWidth="1.500" /></>,
};

function Tray({ time, small }) {
  const px = (n) => (small ? Math.round(n * 0.88) : n);
  const t = (name, n) => <svg viewBox="0 0 20 20" aria-hidden="true" width={px(n)} height={px(n)} className="shrink-0">{TRAY[name]}</svg>;
  return (
    <div className={"flex items-center font-bold text-[#e9e9e9] " + (small ? "gap-[7px] pr-1 text-[10px]" : "gap-2 pr-1 text-[11px]")}>
      {t("perf", 18)}{t("teams", 20)}{t("shield", 17)}{t("skype", 20)}{t("clip", 14)}
      <span className="flex items-center gap-1">{t("bell", 13)}<span>8</span></span>
      <span className="flex items-center gap-1">{t("printer", 13)}<span>22</span></span>
      {t("disk", 14)}{t("net", 15)}{t("volume", 14)}
      <span>{time}</span>
    </div>
  );
}

function AppButton({ name, small, width, open, active, badge }) {
  return (
    <button aria-label={name} className={"relative flex h-full shrink-0 items-center justify-center border-b-2 " + width + (active ? " bg-[#6a6a6a]" : "") + (open || active ? " border-[#8bb158]" : " border-transparent")}>
      <svg viewBox="0 0 24 24" aria-hidden="true" className={small ? "size-[22px]" : "size-6"}>{APPS[name]}</svg>
      {badge && <span className="absolute left-px top-px flex size-[9px] items-center justify-center rounded-full bg-[#444] text-[8px] font-bold leading-none text-white">{badge}</span>}
    </button>
  );
}

const APP_ORDER = ["Firefox", "Mail", "Terminal", "Files", "Firewall", "Gmail", "Chrome", "Skype", "Writer"];

function TaskBar({ small, open, active, badge, time }) {
  return (
    <div className={"flex shrink-0 items-stretch justify-between border-t bg-[#2e2e2e] " + (small ? "h-[31px] border-[#777]" : "h-[34px] border-black")}>
      <div className="flex">
        <AppButton name="Menu" small={small} width={small ? "w-[30px]" : "w-[33px]"} />
        <div className={small ? "w-[2px]" : "w-[4px]"} />
        <AppButton name="Desktop" small={small} width={small ? "w-[31px]" : "w-[34px]"} />
        <div className={"flex justify-between " + (small ? "ml-[6px] w-[305px]" : "ml-[5px] w-[341px]")}>
          {APP_ORDER.map((n) => (
            <AppButton key={n} name={n} small={small} width={small ? "w-[30px]" : "w-[34px]"} open={open.includes(n)} active={active === n} badge={active === n ? badge : null} />
          ))}
        </div>
      </div>
      <Tray time={time} small={small} />
    </div>
  );
}

/* ---------- Picture placed in the document ---------- */
const NAV = [
  ["Overview", FaTachometerAlt, "w-[76px]"],
  ["Correlations...", FaExclamationCircle, "w-[103px]", 1],
  ["Browse by...", FaListUl, "w-[94px]", 1],
  ["Starred", FaStar, "w-[66px]"],
  ["Visualize...", FaEye, "w-[90px]", 1, 1],
  ["Settings", FaCog, "w-[69px]"],
  ["Logs", FaBook, "w-[60px]", 1],
];

function EmbeddedPicture() {
  return (
    <div className="ml-[55px] mr-[61px] flex flex-col border-b border-[#c8c8c8]">
      <div className="flex bg-[#e9edf3] pl-3">
        <div className="mb-[5px] flex-1 rounded-b bg-white">
          <div className="flex h-[18px] justify-between pl-[7px] pr-2">
            <div className="flex overflow-hidden rounded-b-sm bg-[#3c8dbc] text-[10px] leading-3 text-[#e3eff7]">
              {NAV.map(([label, I, w, drop, on]) => (
                <button key={label} className={"flex items-start justify-center gap-1 border-r border-[#367fa9] last:border-r-0 " + w + (on ? " bg-[#275d8b]" : "")}>
                  <I className="size-[11px] shrink-0" />
                  <span className="whitespace-nowrap">{label}</span>
                  {drop && <FaCaretDown className="-ml-px mt-[2px] size-2 shrink-0" />}
                </button>
              ))}
            </div>
            <div className="flex gap-1 text-[#dff5e8]">
              <button aria-label="Refresh" className="flex w-[29px] items-start justify-center rounded-b-sm bg-[#00a65a]"><FaSync className="size-[10px]" /></button>
              <button aria-label="Download" className="flex w-[42px] items-start justify-center gap-2 rounded-b-sm bg-[#00a65a]"><FaDownload className="size-[11px]" /><FaCaretDown className="mt-[2px] size-2" /></button>
            </div>
          </div>
          <Sankey />
        </div>
        <div className="w-[11px]" />
        <div className="w-[9px] border-x-2 border-[#dcdcdc] bg-[#c2c2c2]" />
      </div>
      <TaskBar small open={["Writer"]} active="Firefox" badge="3" time="15:06" />
    </div>
  );
}

const Sep = () => <div className="h-[13px] w-px shrink-0 bg-[#8c8c8c]" />;

export default function App() {
  return (
    <div className="flex h-screen flex-col overflow-hidden bg-[#efefef] font-['Noto_Sans','Open_Sans',sans-serif] text-[11px] leading-4 text-[#3c3c3c]">
      <header className="shrink-0 bg-[#d9d9d9]">
        <div className="grid h-[22px] grid-cols-[1fr_auto_1fr] items-center">
          <span />
          <h1 className="font-semibold">SpiderFoot-Zenith-Bank.docm - LibreOffice Writer</h1>
          <div className="flex items-center justify-end gap-[14px] pr-[7px]">
            <button aria-label="Minimise" className="size-[11px]"><svg viewBox="0 0 11 11"><path d="M3 5.500h5" stroke="#333" strokeWidth="2" /></svg></button>
            <button aria-label="Restore" className="size-[11px]"><svg viewBox="0 0 11 11"><path d="M5.500 3h3v3zM5.500 8h-3v-3z" fill="#222" /></svg></button>
            <button aria-label="Close" className="size-[11px]"><svg viewBox="0 0 11 11"><circle cx="5.500" cy="5.500" r="5.500" fill="#93b572" /><path d="M3.500 3.500l4 4M7.500 3.500l-4 4" stroke="#fff" strokeWidth="1.500" /></svg></button>
          </div>
        </div>
        <nav className="flex h-[20px] items-center gap-[13px] pl-[7px]">
          {["File", "Edit", "View", "Insert", "Format", "Styles", "Table", "Form", "Tools", "Window", "Help"].map((m) => <button key={m}>{m}</button>)}
        </nav>
      </header>

      <div className="flex h-[33px] shrink-0 items-center border-t border-[#e6e6e6] pl-1">
        <Grip />
        <div className="flex gap-2"><ToolGroups groups={FILE_TOOLS} /></div>
      </div>
      <div className="flex h-[33px] shrink-0 items-center pl-1">
        <Grip />
        <Combo label="Paragraph style" value="Default Styl" className="w-[100px]" />
        <Tool name="styleUpdate" label="Update style" />
        <Tool name="styleNew" label="New style" />
        <Combo label="Font name" value="Liberation S" className="ml-2 mr-[6px] w-[100px]" />
        <Combo label="Font size" value="12" className="mr-[6px] w-[65px]" />
        <div className="flex gap-2"><ToolGroups groups={FORMAT_TOOLS} /></div>
      </div>

      <div className="flex min-h-0 flex-1">
        <main className="flex min-w-0 flex-1 flex-col">
          <div className="flex min-h-0 flex-1">
            <div className="flex min-w-0 flex-1 flex-col">
              <Ruler />
              <div className="min-h-0 flex-1 overflow-hidden bg-white"><EmbeddedPicture /></div>
            </div>
            <div className="w-[10px] shrink-0 bg-[#fbfbfb] pl-[2px] pt-[71px]">
              <div className="h-8 w-[5px] rounded-full bg-[#a3a3a3]" />
            </div>
          </div>
          <div className="h-[10px] shrink-0 bg-[#fcfcfc] pl-[133px] pr-[139px] pt-[2px]">
            <div className="h-[6px] rounded-full bg-[#a3a3a3]" />
          </div>
        </main>
        <div className="mb-[2px] flex w-[6px] shrink-0 flex-col items-center justify-center border-x border-[#b3b3b3] bg-[#f1f1f1]">
          <button aria-label="Hide sidebar" className="flex h-[60px] w-[6px] items-center justify-center bg-[#222] text-white"><svg viewBox="0 0 4 8" className="h-2"><path d="M0 0l4 4-4 4z" fill="currentColor" /></svg></button>
        </div>
        <aside className="mb-[2px] flex w-[33px] shrink-0 flex-col items-center border-y border-[#b3b3b3] pt-[3px]">
          <button aria-label="Sidebar settings" className="flex h-7 w-[26px] items-center justify-center"><svg viewBox="0 0 10 10" className="size-[9px]"><path d="M0 1h5M0 3.500h6M0 6h5" stroke="#666" /><path d="M4 6.500h5l-2.500 3z" fill="#111" /></svg></button>
          <div className="mb-[3px] w-[18px] border-t border-[#d3d3d3]" />
          <div className="flex flex-col items-center gap-[3px]">
            {[["wrench", "Properties"], ["page", "Page"], ["type", "Styles"], ["gallery", "Gallery"]].map(([n, l]) => (
              <button key={n} aria-label={l} className="flex h-[26px] w-[26px] items-center justify-center"><Icon name={n} /></button>
            ))}
            <button aria-label="Navigator" className="flex size-[26px] items-center justify-center rounded border border-[#c4c4c4] bg-[#f1f1f1]"><Icon name="compass" /></button>
          </div>
        </aside>
      </div>

      <div className="flex h-[31px] shrink-0 items-center pl-1">
        <Grip />
        <button aria-label="Close find bar" className="flex w-[27px] items-center justify-center"><Icon name="close" className="size-[15px]" /></button>
        <Combo label="Find text" placeholder="Find" className="ml-px w-[208px]" />
        <button aria-label="Find previous" className="flex w-[27px] justify-center"><Icon name="upOff" /></button>
        <button aria-label="Find next" className="flex w-[27px] justify-center"><Icon name="downOff" /></button>
        <button className="ml-1 w-[36px] whitespace-nowrap text-[#8a8a8a]">Find All</button>
        <label className="ml-[6px] flex items-center gap-[6px]">
          <input type="checkbox" className="size-3 appearance-none rounded-sm border border-[#c4c4c4] bg-white" />
          <span className="w-[56px] whitespace-nowrap">Match Case</span>
        </label>
        <button aria-label="Find and replace" className="ml-[8px] flex w-[27px] justify-center"><Icon name="find" /></button>
        <div className="ml-[8px] flex h-[25px] w-[124px] items-center gap-1 rounded-sm border border-[#b3b3b3] bg-[#f6f6f6] px-[6px]">
          <Icon name="page" className="size-[15px]" />
          <select aria-label="Navigate by" className="flex-1 appearance-none bg-transparent outline-none"><option>Page</option></select>
          <Caret className="w-2 text-[#111]" />
        </div>
        <button aria-label="Previous page" className="flex w-[27px] justify-center"><Icon name="up" /></button>
        <button aria-label="Next page" className="flex w-[27px] justify-center"><Icon name="down" /></button>
      </div>

      <footer className="flex h-[18px] shrink-0 items-center border-t border-[#bdbdbd]">
        <span className="w-[243px] pl-2">Page 1 of 5</span><Sep />
        <span className="w-[293px] pl-[6px]">0 words, 0 characters</span><Sep />
        <span className="w-[255px] pl-[6px]">Default Style</span><Sep />
        <span className="w-[249px] text-center">English (UK)</span><Sep />
        <span className="w-[55px]" /><Sep />
        <span className="flex w-[23px] justify-center"><svg viewBox="0 0 12 10" className="w-3"><rect x="0" y="2" width="8" height="6" fill="#888" /><path d="M9 1h2M9 9h2M10.500 1v8" stroke="#888" /></svg></span><Sep />
        <span className="flex w-[24px] justify-center"><svg viewBox="0 0 10 10" className="w-[10px]"><path d="M1 0.500h6l2 2v7h-8z" fill="none" stroke="#999" /><path d="M3 5l2 2 4-4" fill="none" stroke="#888" /></svg></span><Sep />
        <span className="w-[23px]" /><Sep />
        <span className="flex-1" /><Sep />
        <span className="flex w-[62px] items-center justify-center">
          <svg viewBox="0 0 46 10" className="w-[46px]"><path d="M0.500 0.500h4l2 2v7h-6zM4.500 0.500v2h2M12.500 0.500h4l2 2v7h-6zM16.500 0.500v2h2M20.500 0.500h4l2 2v7h-6zM24.500 0.500v2h2M32.500 9.500v-6l2-3h4v9zM38.500 0.500h4l2 3v6h-6z" fill="#f6f6f6" stroke="#777" /></svg>
        </span><Sep />
        <span className="flex w-[118px] items-center justify-center gap-[6px] pl-[2px]">
          <button aria-label="Zoom out"><svg viewBox="0 0 7 7" className="size-[7px]"><path d="M0 3.500h7" stroke="#666" /></svg></button>
          <span className="grid w-[80px] items-center">
            <svg viewBox="0 0 80 10" aria-hidden="true" className="col-start-1 row-start-1 w-[80px]"><path d="M0 5.500h80M25.500 1v9M40.500 1v9" stroke="#999" /></svg>
            <input type="range" aria-label="Zoom" defaultValue="67" className="col-start-1 row-start-1 h-[10px] w-[80px] appearance-none bg-transparent [&::-webkit-slider-thumb]:size-[8px] [&::-webkit-slider-thumb]:appearance-none [&::-webkit-slider-thumb]:rounded-full [&::-webkit-slider-thumb]:border [&::-webkit-slider-thumb]:border-[#888] [&::-webkit-slider-thumb]:bg-white" />
          </span>
          <button aria-label="Zoom in"><svg viewBox="0 0 7 7" className="size-[7px]"><path d="M0 3.500h7M3.500 0v7" stroke="#666" /></svg></button>
        </span><Sep />
        <span className="w-[40px] pl-[6px]">268%</span>
      </footer>

      <TaskBar open={["Firefox", "Files"]} active="Writer" badge="2" time="10:07" />
    </div>
  );
}
